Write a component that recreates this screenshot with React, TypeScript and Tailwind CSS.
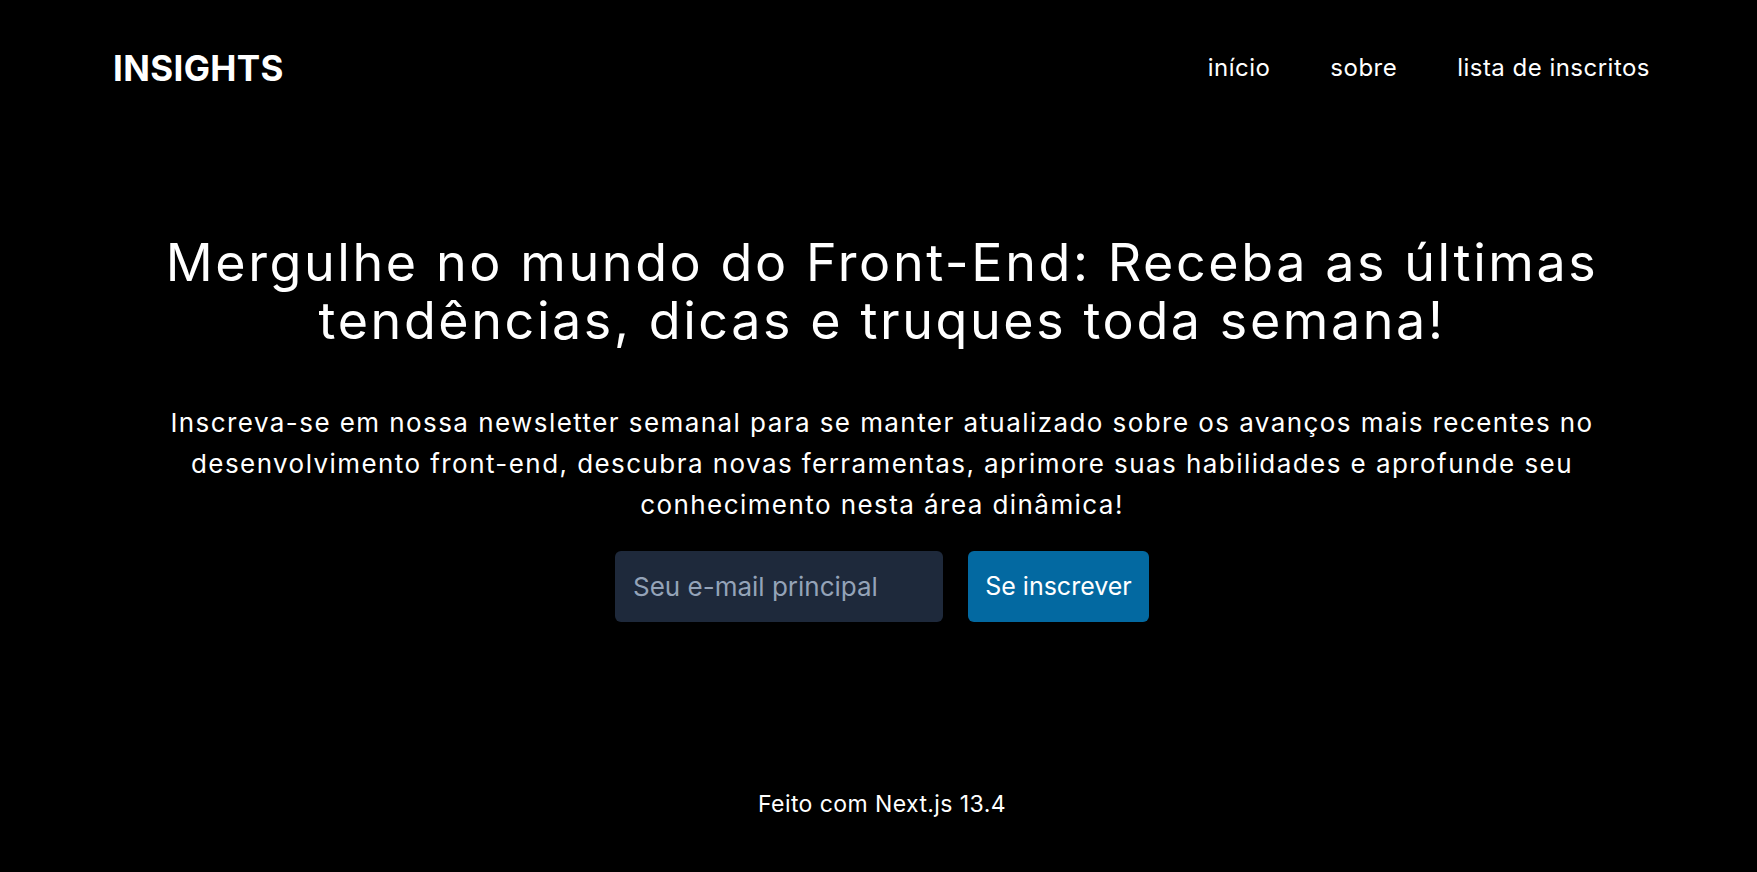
import { useState } from 'react';

const links = ['início', 'sobre', 'lista de inscritos'];

export default function App() {
  const [email, setEmail] = useState('');

  return (
    <div
      className="min-h-screen flex flex-col bg-black text-white"
      style={{ fontFamily: 'Inter, "Noto Sans", sans-serif' }}
    >
      <header className="flex items-center justify-between py-[48px] pl-[113px] pr-[107px]">
        <span className="text-[35px] leading-[40px] font-bold tracking-[0.01em]">INSIGHTS</span>
        <nav className="flex items-center gap-[60px] text-[24px] leading-[32px] tracking-[0.02em]">
          {links.map(l => (
            <a key={l} href="#" className="text-white">{l}</a>
          ))}
        </nav>
      </header>

      <main className="flex-1 flex flex-col items-center pt-[98px] pl-[7px] text-center">
        <h1 className="text-[52px] leading-[58px] font-normal tracking-[0.05em]">
          Mergulhe no mundo do Front-End: Receba as últimas
          <br />
          tendências, dicas e truques toda semana!
        </h1>
        <p className="mt-[52px] text-[26px] leading-[41px] tracking-[0.055em]">
          Inscreva-se em nossa newsletter semanal para se manter atualizado sobre os avanços mais recentes no
          <br />
          desenvolvimento front-end, descubra novas ferramentas, aprimore suas habilidades e aprofunde seu
          <br />
          conhecimento nesta área dinâmica!
        </p>
        <form className="mt-[26px] flex gap-[25px]" onSubmit={e => e.preventDefault()}>
          <input
            type="email"
            value={email}
            onChange={e => setEmail(e.target.value)}
            placeholder="Seu e-mail principal"
            className="w-[328px] h-[71px] rounded-md bg-[#1e293b] px-[18px] text-[26px] text-white placeholder:text-[#94a3b8] outline-none"
          />
          <button type="submit" className="w-[181px] h-[71px] rounded-md bg-[#0369a1] text-[25px] text-white">
            Se inscrever
          </button>
        </form>
      </main>

      <footer className="pb-[52px] pl-[7px] text-center text-[23px] leading-[32px] tracking-[0.018em]">
        Feito com Next.js 13.4
      </footer>
    </div>
  );
}
